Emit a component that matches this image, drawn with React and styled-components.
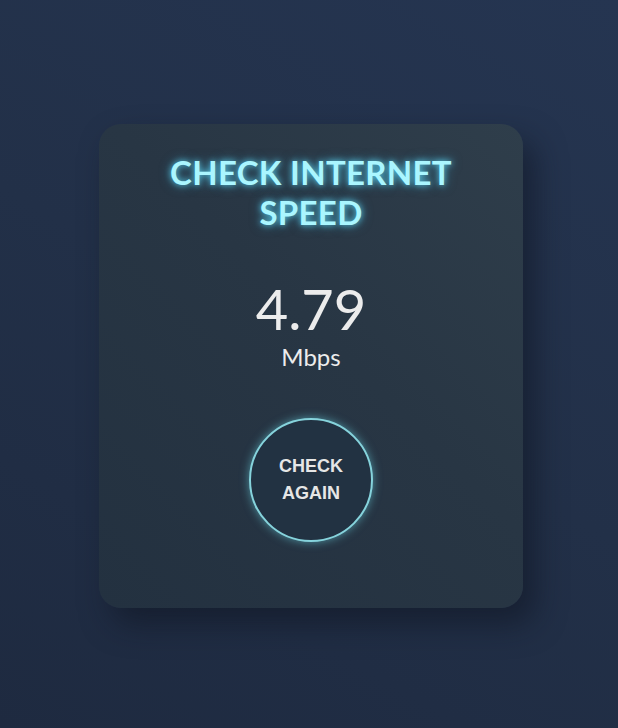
import styled, { createGlobalStyle } from "styled-components";

const GlobalStyle = createGlobalStyle`
  html, body {
    margin: 0;
    padding: 0;
  }
  body {
    min-height: 728px;
    background: linear-gradient(30deg, #1e2a40 0%, #223048 50%, #253551 100%);
    font-family: "Lato", "Noto Sans", sans-serif;
  }
`;

const Page = styled.main`
  min-height: 728px;
  display: flex;
  justify-content: center;
  padding-top: 124px;
  box-sizing: border-box;
`;

const Card = styled.section`
  width: 424px;
  height: 484px;
  margin-left: 4px;
  box-sizing: border-box;
  border-radius: 22px;
  background: linear-gradient(45deg, #233140 0%, #283644 55%, #2f3e4b 100%);
  box-shadow: 12px 16px 30px rgba(14, 20, 32, 0.55);
  display: flex;
  flex-direction: column;
  align-items: center;
  padding-top: 28px;
`;

const Title = styled.h1`
  margin: 0;
  width: 320px;
  text-align: center;
  font-family: "Lato", sans-serif;
  font-weight: 700;
  font-size: 33px;
  line-height: 40px;
  letter-spacing: 0.3px;
  color: #aaf6ff;
  text-shadow: 0 0 6px rgba(96, 225, 255, 0.85), 0 0 12px rgba(70, 200, 240, 0.5);
`;

const Speed = styled.div`
  margin-top: 48px;
  display: flex;
  flex-direction: column;
  align-items: center;
  color: #ececec;
`;

const Value = styled.span`
  font-family: "Lato", sans-serif;
  font-weight: 400;
  font-size: 56px;
  line-height: 58px;
`;

const Unit = styled.span`
  font-family: "Lato", sans-serif;
  font-size: 24px;
  line-height: 28px;
  margin-top: 5px;
`;

const AgainButton = styled.button`
  margin-top: 47px;
  width: 124px;
  height: 124px;
  border-radius: 50%;
  border: 2px solid #86d3dc;
  background: #223242;
  box-shadow: 0 0 10px rgba(110, 220, 235, 0.55);
  color: #e6e6e6;
  font-family: "Liberation Sans", Arial, sans-serif;
  font-weight: 700;
  font-size: 18px;
  line-height: 27px;
  cursor: pointer;
  padding: 0;
`;

export default function App() {
  return (
    <>
      <GlobalStyle />
      <Page>
        <Card>
          <Title>CHECK INTERNET SPEED</Title>
          <Speed>
            <Value>4.79</Value>
            <Unit>Mbps</Unit>
          </Speed>
          <AgainButton>
            CHECK
            <br />
            AGAIN
          </AgainButton>
        </Card>
      </Page>
    </>
  );
}
